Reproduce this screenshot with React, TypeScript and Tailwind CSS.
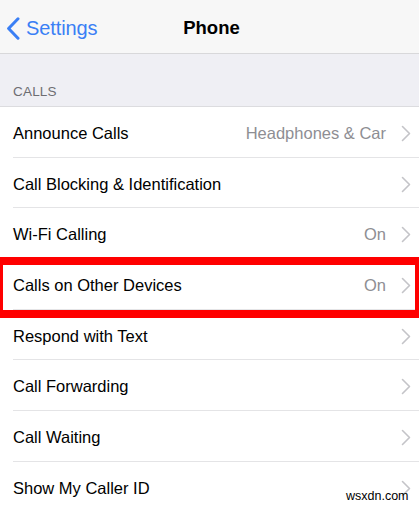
const rows = [
    { label: "Announce Calls", value: "Headphones & Car" },
    { label: "Call Blocking & Identification" },
    { label: "Wi-Fi Calling", value: "On" },
    { label: "Calls on Other Devices", value: "On" },
    { label: "Respond with Text" },
    { label: "Call Forwarding" },
    { label: "Call Waiting" },
    { label: "Show My Caller ID" },
];

function Chevron() {
    return (
        <svg width="10" height="17" viewBox="0 0 10 17" fill="none" className="shrink-0">
            <path d="M1.5 1.5 L8.5 8.5 L1.5 15.5" stroke="#c4c4c8" strokeWidth="1.6" strokeLinecap="round" strokeLinejoin="round" />
        </svg>
    );
}

export default function App() {
    return (
        <div className="relative w-[419px] h-[506px] overflow-hidden bg-white" style={{ fontFamily: '"Liberation Sans", Arial, sans-serif' }}>
            {/* nav bar */}
            <div className="flex items-center h-[54px] pt-[3px] bg-[#f7f7f7] border-b border-[#d8d8da] relative">
                <div className="flex items-center text-[#3a7ff5] pl-[6px]">
                    <svg width="14" height="23" viewBox="0 0 14 23" fill="none" className="mr-[6px]">
                        <path d="M12 1.8 L2.6 11.5 L12 21.2" stroke="#3a7ff5" strokeWidth="3" strokeLinecap="round" strokeLinejoin="round" />
                    </svg>
                    <span className="text-[20px] -tracking-[0.1px]">Settings</span>
                </div>
                <div className="absolute left-0 right-0 text-center pointer-events-none">
                    <span className="text-[18.5px] font-bold text-black pl-[4px]">Phone</span>
                </div>
            </div>

            {/* section header */}
            <div className="h-[53px] bg-[#efeff4] flex items-end px-[13px] pb-[4px] border-b border-[#dcdcdf]">
                <span className="text-[13.5px] text-[#6d6d72] tracking-[0.2px]">CALLS</span>
            </div>

            {/* rows */}
            <div className="flex flex-col">
                {rows.map((r) => (
                    <div key={r.label} className="h-[50.7px] pl-[13px] flex">
                        <div className="flex flex-1 items-center pt-[3px] pr-[8px] border-b border-[#e4e4e6]">
                            <span className="text-[16.5px] text-black flex-1">{r.label}</span>
                            {r.value && <span className="text-[16.5px] text-[#8e8e93] mr-[15px]">{r.value}</span>}
                            <Chevron />
                        </div>
                    </div>
                ))}
            </div>

            {/* highlight annotation */}
            <div className="absolute left-[-5px] top-[257px] w-[428px] h-[61px] border-[8px] border-[#ff0000]" />

            {/* watermark */}
            <div className="absolute left-[346px] top-[487px] text-[12.5px] text-black">wsxdn.com</div>
        </div>
    );
}
